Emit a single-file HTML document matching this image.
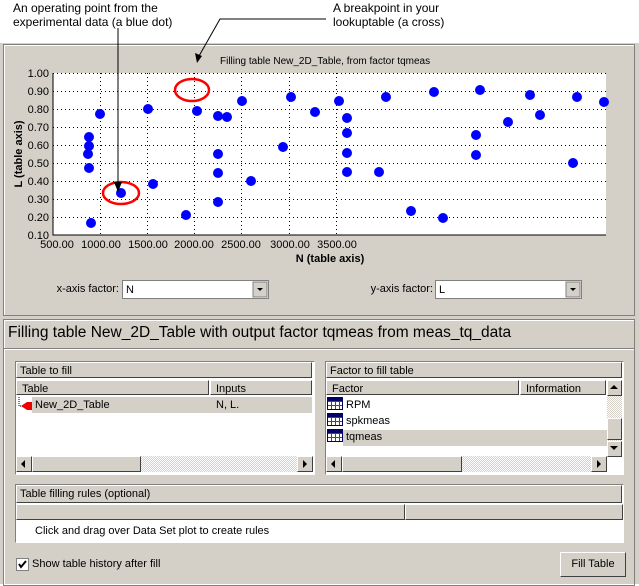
<!DOCTYPE html>
<html><head><style>
body{margin:0;width:639px;height:584px;overflow:hidden;background:#fff;font-family:"Liberation Sans",sans-serif;position:relative}
.a{position:absolute}
.sunk{border:1px solid;border-color:#808080 #fff #fff #808080}
.rais{border:1px solid;border-color:#fff #404040 #404040 #fff;background:#d4d0c8}
.f11{font-size:11px}
.hs{background:repeating-conic-gradient(#d4d0c8 0 25%,#fff 0 50%) 0 0/2px 2px}
</style></head><body>
<div class="a" style="left:13px;top:1px;font-size:12px;line-height:14px">An operating point from the<br>experimental data (a blue dot)</div>
<div class="a" style="left:333px;top:1px;font-size:12px;line-height:14px">A breakpoint in your<br>lookuptable (a cross)</div>
<div class="a" style="left:0;top:43px;width:639px;height:541px;background:#d4d0c8"></div>
<div class="a" style="left:3px;top:44px;width:630px;height:270px;border:1px solid #808080;box-shadow:inset 1px 1px #fff"></div>
<svg class="a" style="left:0;top:0" width="639" height="320" font-family="Liberation Sans" font-size="11">
<text x="220" y="64" font-size="10">Filling table New_2D_Table, from factor tqmeas</text>
<rect x="53" y="73" width="553" height="162" fill="#fff"/>
<g stroke="#000" stroke-dasharray="1,3" stroke-width="1">
<path d="M53 73.5H606M53 91.5H606M53 109.5H606M53 127.5H606M53 145.5H606M53 163.5H606M53 181.5H606M53 199.5H606M53 217.5H606"/>
<path d="M100.5 73V235M147.5 73V235M194.5 73V235M241.5 73V235M289.5 73V235M336.5 73V235"/>
</g>
<path d="M53 73V235H606" stroke="#000" fill="none"/>
<g font-size="11" text-anchor="end"><text x="49" y="77">1.00</text><text x="49" y="95">0.90</text><text x="49" y="113">0.80</text><text x="49" y="131">0.70</text><text x="49" y="149">0.60</text><text x="49" y="167">0.50</text><text x="49" y="185">0.40</text><text x="49" y="203">0.30</text><text x="49" y="221">0.20</text><text x="49" y="239">0.10</text></g>
<g text-anchor="middle"><text x="57" y="248">500.00</text><text x="101" y="248">1000.00</text><text x="148" y="248">1500.00</text><text x="194" y="248">2000.00</text><text x="241" y="248">2500.00</text><text x="290" y="248">3000.00</text><text x="337" y="248">3500.00</text></g>
<text x="330" y="262" font-weight="bold" text-anchor="middle">N (table axis)</text>
<text transform="translate(22,154) rotate(-90)" font-weight="bold" text-anchor="middle">L (table axis)</text>
<g fill="#00f">
<circle cx="89" cy="137" r="5"/><circle cx="89" cy="146" r="5"/><circle cx="88" cy="154" r="5"/><circle cx="89" cy="168" r="5"/><circle cx="100" cy="114" r="5"/><circle cx="91" cy="223" r="5"/><circle cx="121" cy="193" r="5"/><circle cx="148" cy="109" r="5"/><circle cx="153" cy="184" r="5"/><circle cx="186" cy="215" r="5"/><circle cx="197" cy="111" r="5"/><circle cx="218" cy="116" r="5"/><circle cx="227" cy="117" r="5"/><circle cx="218" cy="154" r="5"/><circle cx="218" cy="173" r="5"/><circle cx="218" cy="202" r="5"/><circle cx="242" cy="101" r="5"/><circle cx="251" cy="181" r="5"/><circle cx="283" cy="147" r="5"/><circle cx="291" cy="97" r="5"/><circle cx="315" cy="112" r="5"/><circle cx="339" cy="101" r="5"/><circle cx="347" cy="118" r="5"/><circle cx="347" cy="133" r="5"/><circle cx="347" cy="153" r="5"/><circle cx="347" cy="172" r="5"/><circle cx="379" cy="172" r="5"/><circle cx="386" cy="97" r="5"/><circle cx="411" cy="211" r="5"/><circle cx="434" cy="92" r="5"/><circle cx="443" cy="218" r="5"/><circle cx="476" cy="135" r="5"/><circle cx="476" cy="155" r="5"/><circle cx="480" cy="90" r="5"/><circle cx="508" cy="122" r="5"/><circle cx="530" cy="95" r="5"/><circle cx="540" cy="115" r="5"/><circle cx="573" cy="163" r="5"/><circle cx="577" cy="97" r="5"/><circle cx="604" cy="102" r="5"/>
</g>
<g fill="none" stroke="#f00" stroke-width="2.5"><ellipse cx="121" cy="193" rx="18" ry="11"/><ellipse cx="192" cy="90" rx="17" ry="11"/></g>
<g stroke="#000" fill="none"><path d="M118 28V183"/><path d="M326 19H220L199 56"/></g>
<path d="M114 182L118 192L122 182Z M195 53L197 63L202 56Z"/>
<text x="119" y="292" text-anchor="end">x-axis factor:</text>
<rect x="122.5" y="280.5" width="146" height="18" fill="#fff" stroke="#808080"/>
<text x="126" y="293">N</text>
<rect x="253" y="282" width="14" height="15" fill="#d4d0c8" stroke="#808080"/><path d="M257 288h6l-3 3z"/>
<text x="433" y="292" text-anchor="end">y-axis factor:</text>
<rect x="435.5" y="280.5" width="146" height="18" fill="#fff" stroke="#808080"/>
<text x="439" y="293">L</text>
<rect x="566" y="282" width="14" height="15" fill="#d4d0c8" stroke="#808080"/><path d="M570 288h6l-3 3z"/>
</svg>
<div class="a" style="left:3px;top:319px;width:630px;height:265px;border:1px solid #808080;box-shadow:inset 1px 1px #fff"></div>
<div class="a" style="left:8px;top:324px;font-size:15.5px">Filling table New_2D_Table with output factor tqmeas from meas_tq_data</div>
<div class="a" style="left:4px;top:348px;width:630px;height:1px;background:#808080;border-bottom:1px solid #fff"></div>
<div class="a sunk" style="left:15px;top:361px;width:298px;height:112px;background:#fff"></div>
<div class="a rais f11" style="left:16px;top:362px;height:16px;line-height:16px;padding-left:3px;box-sizing:border-box;width:296px">Table to fill</div>
<div class="a rais f11" style="left:16px;top:380px;width:193px;height:15px;line-height:16px;padding-left:5px;box-sizing:border-box">Table</div>
<div class="a rais f11" style="left:210px;top:380px;width:102px;height:15px;line-height:16px;padding-left:5px;box-sizing:border-box">Inputs</div>
<div class="a f11" style="left:32px;top:397px;width:280px;height:16px;background:#d4d0c8;line-height:16px;padding-left:3px;box-sizing:border-box">New_2D_Table</div>
<div class="a f11" style="left:216px;top:397px;line-height:16px">N, L.</div>
<svg class="a" style="left:17px;top:397px" width="16" height="16"><path d="M2 0V9H6" stroke="#000" fill="none" stroke-dasharray="1,1"/><path d="M4 9L10 5H15V13H10Z" fill="#e00"/></svg>
<div class="a hs" style="left:16px;top:456px;width:296px;height:16px"></div>
<div class="a rais" style="left:16px;top:456px;width:14px;height:14px"></div><div class="a" style="left:21px;top:460px;border:4px solid transparent;border-right:4px solid #000;border-left:0"></div>
<div class="a rais" style="left:32px;top:456px;width:107px;height:14px"></div>
<div class="a rais" style="left:297px;top:456px;width:14px;height:14px"></div><div class="a" style="left:303px;top:460px;border:4px solid transparent;border-left:4px solid #000;border-right:0"></div>
<div class="a sunk" style="left:325px;top:361px;width:297px;height:112px;background:#fff"></div>
<div class="a rais f11" style="left:326px;top:362px;width:296px;height:16px;line-height:16px;padding-left:3px;box-sizing:border-box">Factor to fill table</div>
<div class="a rais f11" style="left:326px;top:380px;width:193px;height:15px;line-height:16px;padding-left:5px;box-sizing:border-box">Factor</div>
<div class="a rais f11" style="left:520px;top:380px;width:86px;height:15px;line-height:16px;padding-left:5px;box-sizing:border-box">Information</div>
<div class="a hs" style="left:607px;top:380px;width:15px;height:76px"></div>
<div class="a rais" style="left:607px;top:380px;width:13px;height:14px"></div><div class="a" style="left:610px;top:385px;border:4px solid transparent;border-bottom:4px solid #000;border-top:0"></div>
<div class="a rais" style="left:607px;top:418px;width:13px;height:20px"></div>
<div class="a rais" style="left:607px;top:441px;width:13px;height:14px"></div><div class="a" style="left:610px;top:446px;border:4px solid transparent;border-top:4px solid #000;border-bottom:0"></div>
<div class="a" style="left:343px;top:430px;width:264px;height:16px;background:#d4d0c8"></div>
<div class="a f11" style="left:327px;top:397px;line-height:16px">
<div><span style="display:inline-block;width:14px;height:11px;border:1px solid #006;background:linear-gradient(#006 3px,transparent 0),repeating-linear-gradient(90deg,transparent 0 3px,#446 3px 4px),repeating-linear-gradient(transparent 0 3px,#446 3px 4px);vertical-align:-2px;margin-right:3px"></span>RPM</div>
<div><span style="display:inline-block;width:14px;height:11px;border:1px solid #006;background:linear-gradient(#006 3px,transparent 0),repeating-linear-gradient(90deg,transparent 0 3px,#446 3px 4px),repeating-linear-gradient(transparent 0 3px,#446 3px 4px);vertical-align:-2px;margin-right:3px"></span>spkmeas</div>
<div><span style="display:inline-block;width:14px;height:11px;border:1px solid #006;background:linear-gradient(#006 3px,transparent 0),repeating-linear-gradient(90deg,transparent 0 3px,#446 3px 4px),repeating-linear-gradient(transparent 0 3px,#446 3px 4px);vertical-align:-2px;margin-right:3px"></span>tqmeas</div>
</div>
<div class="a hs" style="left:326px;top:456px;width:280px;height:16px"></div>
<div class="a rais" style="left:326px;top:456px;width:14px;height:14px"></div><div class="a" style="left:331px;top:460px;border:4px solid transparent;border-right:4px solid #000;border-left:0"></div>
<div class="a rais" style="left:342px;top:456px;width:118px;height:14px"></div>
<div class="a rais" style="left:591px;top:456px;width:14px;height:14px"></div><div class="a" style="left:597px;top:460px;border:4px solid transparent;border-left:4px solid #000;border-right:0"></div>
<div class="a sunk" style="left:15px;top:484px;width:607px;height:57px;background:#fff"></div>
<div class="a rais f11" style="left:16px;top:485px;width:606px;height:18px;line-height:17px;padding-left:3px;box-sizing:border-box">Table filling rules (optional)</div>
<div class="a rais" style="left:16px;top:504px;width:387px;height:14px"></div>
<div class="a rais" style="left:405px;top:504px;width:216px;height:14px"></div>
<div class="a f11" style="left:35px;top:523px;line-height:16px">Click and drag over Data Set plot to create rules</div>
<div class="a" style="left:16px;top:558px;width:11px;height:11px;background:#fff;border:1px solid #808080"></div>
<svg class="a" style="left:17px;top:559px" width="11" height="11"><path d="M2 5L4 8L9 2" stroke="#000" stroke-width="2" fill="none"/></svg>
<div class="a f11" style="left:32px;top:557px;line-height:14px">Show table history after fill</div>
<div class="a rais f11" style="left:560px;top:552px;width:64px;height:23px;line-height:22px;text-align:center">Fill Table</div>
</body></html>
